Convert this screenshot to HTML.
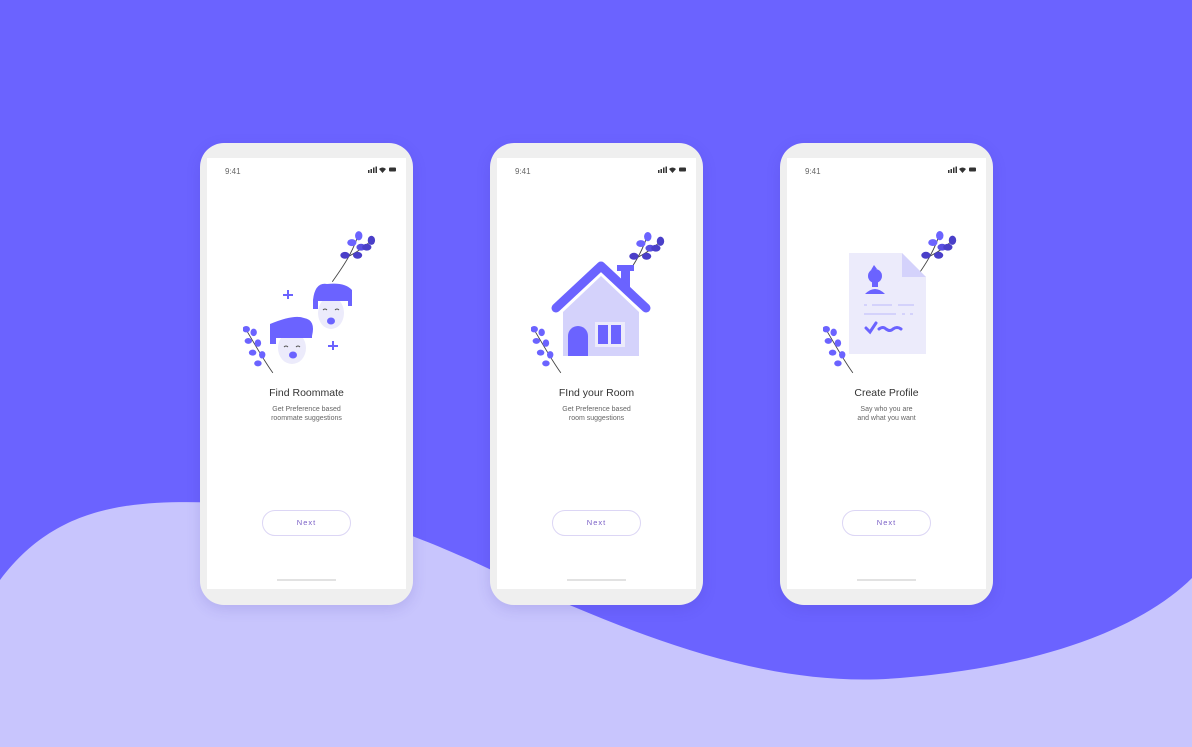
<!DOCTYPE html>
<html><head><meta charset="utf-8"><style>
html,body{margin:0;padding:0}
body{width:1192px;height:747px;position:relative;overflow:hidden;background:#6b63ff;font-family:"Liberation Sans",sans-serif}
.bg{position:absolute;left:0;top:0}
.phone{position:absolute;top:143px;width:213px;height:462px;background:#efefef;border-radius:24px;box-shadow:0 4px 14px rgba(60,50,160,.15)}
.screen{position:absolute;left:7px;top:15px;width:199px;height:431px;background:#fff}
.time{position:absolute;left:18px;top:9px;font-size:8px;color:#666}
.stat{position:absolute;right:10px;top:8px}
.title{position:absolute;left:0;width:100%;top:229px;text-align:center;font-size:10.5px;color:#333}
.sub{position:absolute;left:0;width:100%;top:247px;text-align:center;font-size:7px;line-height:9px;color:#666}
.btn{position:absolute;left:55px;top:352px;width:87px;height:24px;border:1px solid #dcd6f5;border-radius:13px;text-align:center;line-height:24px;font-size:7.5px;color:#7a5fc6;letter-spacing:1px}
.bar{position:absolute;left:70px;top:421px;width:59px;height:2px;background:#e2e2e2}
.art{position:absolute;left:0;top:0}
</style></head><body>
<svg class="bg" width="1192" height="747"><path d="M0 580 C60 500 140 500 230 503 C330 506 380 520 470 560 C620 630 760 690 900 678 C1060 665 1150 620 1192 578 L1192 747 L0 747 Z" fill="#c8c5fd"/></svg>
<svg width="0" height="0" style="position:absolute"><defs>
<symbol id="br" viewBox="0 0 40 45"><path d="M2 44 C12 30 20 18 25 2" stroke="#444" stroke-width="0.8" fill="none"/><path d="M16 22 C24 18 30 14 36 8" stroke="#444" stroke-width="0.8" fill="none"/>
<ellipse cx="25" cy="4" rx="3.2" ry="4" fill="#6b63ff"/><ellipse cx="19" cy="10" rx="4" ry="3" fill="#6b63ff"/><ellipse cx="27" cy="14" rx="4" ry="3" fill="#5a4fe0"/><ellipse cx="13" cy="21" rx="4" ry="3" fill="#4a3fc8"/><ellipse cx="36" cy="8" rx="3.2" ry="4" fill="#4a3fc8"/><ellipse cx="32" cy="14" rx="4" ry="3" fill="#4a3fc8"/><ellipse cx="24" cy="21" rx="4" ry="3" fill="#4a3fc8"/></symbol>
<symbol id="bl" viewBox="0 0 30 45"><path d="M2 2 C10 15 18 30 28 44" stroke="#444" stroke-width="0.8" fill="none"/>
<ellipse cx="3" cy="3" rx="3.5" ry="3" fill="#6b63ff"/><ellipse cx="10" cy="6" rx="3" ry="3.5" fill="#6b63ff"/><ellipse cx="5" cy="14" rx="3.5" ry="2.8" fill="#6b63ff"/><ellipse cx="14" cy="16" rx="3" ry="3.5" fill="#6b63ff"/><ellipse cx="9" cy="25" rx="3.5" ry="2.8" fill="#6b63ff"/><ellipse cx="18" cy="27" rx="3" ry="3.5" fill="#6b63ff"/><ellipse cx="14" cy="35" rx="3.5" ry="2.8" fill="#6b63ff"/></symbol>
<symbol id="st" viewBox="0 0 28 8"><rect x="0" y="4" width="1.5" height="3" fill="#333"/><rect x="2.5" y="3" width="1.5" height="4" fill="#333"/><rect x="5" y="1.5" width="1.5" height="5.5" fill="#333"/><rect x="7.5" y="0.5" width="1.5" height="6.5" fill="#333"/><path d="M11 3 Q14.5 0 18 3 L14.5 7 Z" fill="#333"/><rect x="21" y="1.5" width="7" height="4" rx="1" fill="#333"/></symbol>
</defs></svg>

<div class="phone" style="left:200px"><div class="screen">
<div class="time">9:41</div><svg class="stat" width="28" height="8"><use href="#st"/></svg>
<svg class="art" width="199" height="230">
<use href="#br" x="123" y="73" width="46" height="52"/>
<use href="#bl" x="36" y="167" width="32" height="50"/>
<g fill="#6b63ff"><rect x="80" y="132" width="2" height="9"/><rect x="76" y="136" width="10" height="2"/><rect x="125" y="183" width="2" height="9"/><rect x="121" y="187" width="10" height="2"/></g>
<ellipse cx="124" cy="155" rx="13" ry="16" fill="#ecebfb"/>
<path d="M106 142 q2 -18 14 -16 q18 -2 25 6 v16 h-4 v-5 h-30 v8 h-5z" fill="#6b63ff"/>
<ellipse cx="124" cy="163" rx="4" ry="3.5" fill="#6b63ff"/>
<path d="M116 152 q2 -2 4 0 M128 152 q2 -2 4 0" stroke="#555" fill="none" stroke-width="1"/>
<ellipse cx="85" cy="190" rx="14" ry="16" fill="#ecebfb"/>
<path d="M63 166 q24 -10 34 -6 q12 2 8 18 v2 h-36 v6 h-6z" fill="#6b63ff"/>
<ellipse cx="86" cy="197" rx="4" ry="3.5" fill="#6b63ff"/>
<path d="M77 189 q2 -2 4 0 M89 189 q2 -2 4 0" stroke="#555" fill="none" stroke-width="1"/>
</svg>
<div class="title">Find Roommate</div>
<div class="sub">Get Preference based<br>roommate suggestions</div>
<div class="btn">Next</div><div class="bar"></div>
</div></div>

<div class="phone" style="left:490px"><div class="screen">
<div class="time">9:41</div><svg class="stat" width="28" height="8"><use href="#st"/></svg>
<svg class="art" width="199" height="230">
<use href="#br" x="121" y="74" width="48" height="52"/>
<use href="#bl" x="34" y="167" width="32" height="50"/>
<rect x="124" y="110" width="9" height="20" fill="#6b63ff"/><rect x="120" y="107" width="17" height="6" fill="#6b63ff"/>
<path d="M66 154 L104 118 L142 154 V198 H66Z" fill="#d4d2fb"/>
<path d="M59 150 L104 108 L149 150" stroke="#6b63ff" stroke-width="9" stroke-linecap="round" stroke-linejoin="round" fill="none"/>
<path d="M71 198 V178 a10 10 0 0 1 20 0 V198Z" fill="#6b63ff"/>
<rect x="98" y="164" width="30" height="25" fill="#ecebfb"/><rect x="101" y="167" width="10" height="19" fill="#6b63ff"/><rect x="114" y="167" width="10" height="19" fill="#6b63ff"/>
</svg>
<div class="title">FInd your Room</div>
<div class="sub">Get Preference based<br>room suggestions</div>
<div class="btn">Next</div><div class="bar"></div>
</div></div>

<div class="phone" style="left:780px"><div class="screen">
<div class="time">9:41</div><svg class="stat" width="28" height="8"><use href="#st"/></svg>
<svg class="art" width="199" height="230">
<use href="#br" x="123" y="73" width="48" height="52"/>
<use href="#bl" x="36" y="167" width="32" height="50"/>
<path d="M62 95 H115 L139 119 V196 H62Z" fill="#ecebfb"/>
<path d="M115 95 L139 119 H115Z" fill="#d4d2fb"/>
<circle cx="88" cy="118" r="7" fill="#6b63ff"/><path d="M84 112 l3 -5 3 4z" fill="#6b63ff"/><path d="M78 136 q10 -10 20 0z" fill="#6b63ff"/><rect x="85" y="123" width="6" height="6" fill="#6b63ff"/>
<g fill="#d4d2fb"><rect x="77" y="146" width="3" height="2"/><rect x="85" y="146" width="20" height="2"/><rect x="111" y="146" width="16" height="2"/><rect x="77" y="155" width="32" height="2"/><rect x="115" y="155" width="3" height="2"/><rect x="123" y="155" width="3" height="2"/></g>
<path d="M79 170 l4 4 l6 -9 M92 171 q4 -3 7 0 q4 3 7 0 q4 -3 8 0" stroke="#6b63ff" stroke-width="3" fill="none" stroke-linecap="round"/>
</svg>
<div class="title">Create Profile</div>
<div class="sub">Say who you are<br>and what you want</div>
<div class="btn">Next</div><div class="bar"></div>
</div></div>
</body></html>
